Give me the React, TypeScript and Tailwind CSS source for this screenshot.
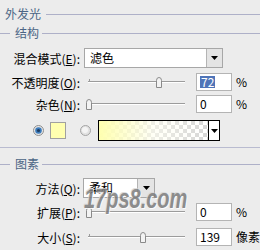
import React from 'react';

const FONT = "font-['Noto_Sans_CJK_SC','Noto_Sans',sans-serif]";

const Arrow = () => (
    <svg width="7" height="4" viewBox="0 0 7 4">
        <path d="M0 0 H7 L3.5 4 Z" fill="#000" />
    </svg>
);

const Label = ({ text, k }: { text: string; k: string }) => (
    <div className="w-[80px] text-right text-[12px] leading-none text-black pt-[2px] whitespace-nowrap">
        {text}(<u>{k}</u>):
    </div>
);

const Slider = ({ value, max }: { value: number; max: number }) => {
    const left = Math.round((value / max) * 97) - 3;
    return (
        <div className="relative w-[97px] h-full ml-[8px]">
            <div className="absolute left-0 right-0 top-[8px] h-[1px] bg-[#9c9c9c]" />
            <div className="absolute left-0 right-0 top-[9px] h-[1px] bg-white" />
            <div className="absolute left-[1px] top-[6px] w-[1px] h-[3px] bg-[#9c9c9c]" />
            <svg className="absolute top-[4px]" style={{ left }} width="8" height="11" viewBox="0 0 8 11">
                <path d="M1.5 10.5 V3.5 Q1.5 0.5 4 0.5 Q6.5 0.5 6.5 3.5 V10.5 Z" fill="#f3f3f3" stroke="#8a8a8a" />
            </svg>
        </div>
    );
};

const NumBox = ({ children }: { children: React.ReactNode }) => (
    <div className="w-[36px] h-full ml-[11px] bg-white border border-[#b4b4b4] flex items-center pl-[3px] text-[12px] leading-none text-black">
        {children}
    </div>
);

const GroupTitle = ({ text }: { text: string }) => (
    <div className="flex items-center h-[14px]">
        <div className="w-[10px] h-[1px] bg-[#aeb0c8]" />
        <div className="ml-[5px] text-[12px] leading-none text-[#4b6585]">{text}</div>
        <div className="flex-1 ml-[3px] h-[1px] bg-[#aeb0c8]" />
    </div>
);

const App: React.FC = () => {
    return (
        <div className={`relative w-[260px] h-[250px] overflow-hidden bg-[#ececec] ${FONT}`}>
            <div className="flex flex-col pt-[6px]">
                {/* 外发光 */}
                <div className="flex items-center h-[16px] pl-[5px]">
                    <div className="text-[12px] leading-none text-[#4b6585]">外发光</div>
                    <div className="flex-1 ml-[5px] h-[1px] bg-[#aeb0c8]" />
                </div>

                {/* 结构 */}
                <div className="mt-[4px]">
                    <GroupTitle text="结构" />
                </div>

                <div className="flex items-center h-[20px] mt-[8px]">
                    <Label text="混合模式" k="E" />
                    <div className="ml-[4px] w-[139px] h-full bg-white border border-[#a7a7a7] flex items-center">
                        <div className="flex-1 pl-[5px] text-[12px] leading-none text-black">滤色</div>
                        <div className="w-[16px] h-full border-l border-[#b4b4b4] bg-[#e4e4e4] flex items-center justify-center">
                            <Arrow />
                        </div>
                    </div>
                </div>

                <div className="flex items-center h-[18px] mt-[5px]">
                    <Label text="不透明度" k="O" />
                    <Slider value={72} max={100} />
                    <NumBox>
                        <span className="bg-[#4f74b8] text-white px-[1px]">72</span>
                    </NumBox>
                    <div className="ml-[4px] text-[12px] leading-none text-black">%</div>
                </div>

                <div className="flex items-center h-[18px] mt-[4px]">
                    <Label text="杂色" k="N" />
                    <Slider value={0} max={100} />
                    <NumBox>0</NumBox>
                    <div className="ml-[4px] text-[12px] leading-none text-black">%</div>
                </div>

                <div className="flex items-center h-[21px] mt-[7px] pl-[33px]">
                    <svg width="11" height="11" viewBox="0 0 11 11">
                        <circle cx="5.5" cy="5.5" r="5" fill="#e6e6e6" stroke="#8e8e8e" />
                        <circle cx="5.5" cy="5.5" r="3.3" fill="#3d7cbc" />
                        <circle cx="5.5" cy="5.5" r="1.6" fill="#1d3d63" />
                    </svg>
                    <div className="ml-[6px] w-[16px] h-[17px] bg-[#ffffb0] border border-[#a0a0a0]" />
                    <svg className="ml-[14px]" width="11" height="11" viewBox="0 0 11 11">
                        <circle cx="5.5" cy="5.5" r="5" fill="#e2e2e2" stroke="#a4a4a4" />
                        <circle cx="5" cy="5" r="3" fill="#f4f4f4" />
                    </svg>
                    <div className="ml-[7px] w-[122px] h-full border border-black flex">
                        <div className="flex-1 h-full bg-[image:repeating-conic-gradient(#d6d6d6_0%_25%,#ffffff_0%_50%)] bg-[length:8px_8px]">
                            <div className="w-full h-full bg-linear-to-r from-[#ffffb0] via-[#fffff0]/60 to-transparent" />
                        </div>
                        <div className="w-[11px] h-full border-l border-black bg-white flex items-center justify-center">
                            <Arrow />
                        </div>
                    </div>
                </div>

                <div className="mt-[6px] h-[1px] bg-[#b9bbd0]" />

                {/* 图素 */}
                <div className="mt-[9px]">
                    <GroupTitle text="图素" />
                </div>

                <div className="flex items-center h-[20px] mt-[7px]">
                    <Label text="方法" k="Q" />
                    <div className="ml-[3px] w-[72px] h-full bg-white border border-[#a7a7a7] flex items-center">
                        <div className="flex-1 pl-[5px] text-[12px] leading-none text-black">柔和</div>
                        <div className="w-[17px] h-full border-l border-[#b4b4b4] bg-[#e4e4e4] flex items-center justify-center">
                            <Arrow />
                        </div>
                    </div>
                </div>

                <div className="flex items-center h-[18px] mt-[5px]">
                    <Label text="扩展" k="P" />
                    <Slider value={0} max={100} />
                    <NumBox>0</NumBox>
                    <div className="ml-[4px] text-[12px] leading-none text-black">%</div>
                </div>

                <div className="flex items-center h-[18px] mt-[7px]">
                    <Label text="大小" k="S" />
                    <Slider value={139} max={250} />
                    <NumBox>139</NumBox>
                    <div className="ml-[4px] text-[12px] leading-none text-black">像素</div>
                </div>
            </div>

            {/* watermark */}
            <div className="absolute left-[84px] top-[186px] origin-left scale-x-[0.74] text-[27px] font-bold italic leading-none text-[#7c7c7c] opacity-85 font-['Liberation_Sans',sans-serif] [text-shadow:1px_1px_0_#ffffff,-1px_-1px_0_#d8d8d8] pointer-events-none">
                17ps8.com
            </div>
        </div>
    );
};

export default App;
